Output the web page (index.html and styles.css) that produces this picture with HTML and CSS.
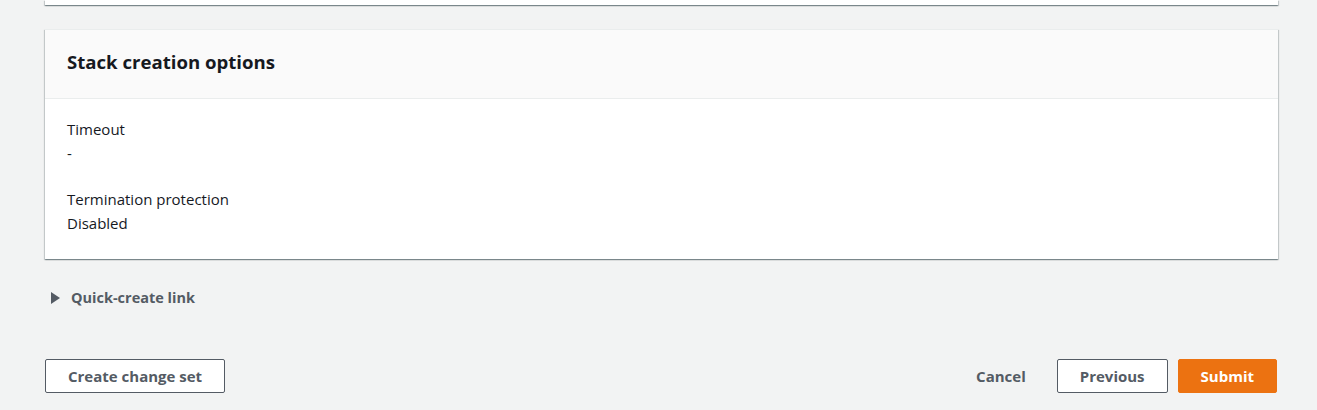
FILE: index.html
```html
<!DOCTYPE html>
<html lang="en">
<head>
<meta charset="utf-8">
<title>Review stack</title>
<link rel="stylesheet" href="styles.css">
</head>
<body>
<div class="page">
  <div class="card card-prev"></div>

  <section class="card">
    <header class="card-header">
      <h2>Stack creation options</h2>
    </header>
    <div class="card-body">
      <div class="kv">
        <div class="kv-label">Timeout</div>
        <div class="kv-value">-</div>
      </div>
      <div class="kv">
        <div class="kv-label">Termination protection</div>
        <div class="kv-value">Disabled</div>
      </div>
    </div>
  </section>

  <div class="expander">
    <span class="caret"></span>
    <span class="expander-label">Quick-create link</span>
  </div>

  <div class="actions">
    <button class="btn">Create change set</button>
    <div class="actions-right">
      <button class="btn btn-link">Cancel</button>
      <button class="btn">Previous</button>
      <button class="btn btn-primary">Submit</button>
    </div>
  </div>
</div>
</body>
</html>
```

FILE: styles.css
```css
* { box-sizing: border-box; }
html, body {
  margin: 0;
  padding: 0;
  background: #f2f3f3;
  font-family: "Open Sans", "Noto Sans", sans-serif;
  color: #16191f;
  font-size: 15px;
  line-height: 22px;
}
.page {
  width: 1233px;
  margin-left: 45px;
}
.card {
  background: #fff;
  border-top: 1px solid #eaeded;
  box-shadow: 0 1px 1px 0 rgba(0, 28, 36, 0.3),
              1px 1px 1px 0 rgba(0, 28, 36, 0.15),
              -1px 1px 1px 0 rgba(0, 28, 36, 0.15);
}
.card-prev {
  height: 5px;
  border-top: 0;
  margin-bottom: 24px;
}
.card-header {
  background: #fafafa;
  border-bottom: 1px solid #eaeded;
  padding: 21px 22px 25px;
}
.card-header h2 {
  margin: 0;
  font-size: 18.6px;
  line-height: 22px;
  font-weight: 700;
}
.card-body {
  padding: 18px 22px 24px;
  display: flex;
  flex-direction: column;
  gap: 22px;
}
.kv-label, .kv-value {
  line-height: 24px;
}
.expander {
  margin-top: 27px;
  display: flex;
  align-items: center;
  gap: 11px;
  padding-left: 6px;
  height: 24px;
  color: #545b64;
  font-size: 14.5px;
  font-weight: 700;
}
.caret {
  width: 0;
  height: 0;
  border-top: 6px solid transparent;
  border-bottom: 6px solid transparent;
  border-left: 9px solid #545b64;
}
.actions {
  margin-top: 49px;
  display: flex;
  justify-content: space-between;
  align-items: center;
}
.actions-right {
  display: flex;
  align-items: center;
  gap: 10px;
  margin-right: 1px;
}
.btn {
  font-family: inherit;
  font-size: 15px;
  font-weight: 700;
  line-height: 22px;
  height: 34px;
  padding: 5px 22px;
  border: 1px solid #545b64;
  border-radius: 2px;
  background: #fff;
  color: #545b64;
  cursor: pointer;
}
.btn-link {
  border-color: transparent;
  background: transparent;
  margin-right: -2px;
}
.btn-primary {
  background: #ec7211;
  border-color: #ec7211;
  color: #fff;
}
```
